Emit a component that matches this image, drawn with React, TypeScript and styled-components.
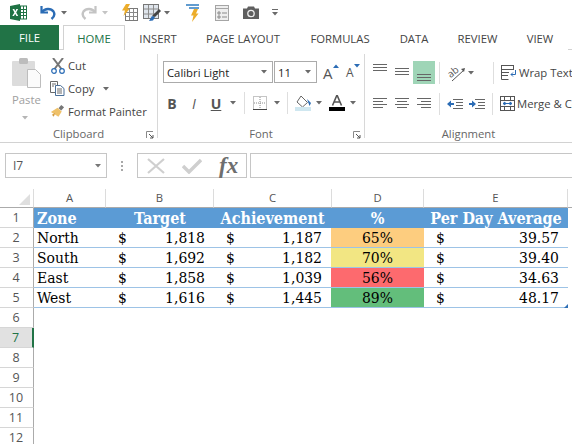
import styled, { createGlobalStyle } from 'styled-components';
import { ReactNode } from 'react';

const GlobalStyle = createGlobalStyle`
  html, body {
    margin: 0;
    padding: 0;
    width: 572px;
    height: 444px;
    overflow: hidden;
    background: #fff;
  }
  * { box-sizing: border-box; }
`;

const Caret = ({ color = '#6a6a6a' }: { color?: string }) => (
  <svg width="6" height="4" viewBox="0 0 6 4"><path d="M0 0h6L3 3.5z" fill={color} /></svg>
);

const ExcelLogo = () => (
  <svg width="17" height="17" viewBox="0 0 17 17">
    <rect x="5" y="2" width="11.5" height="13" fill="#fff" stroke="#1f7244" />
    <path d="M10.500 2v13M13.500 2v13M6 5.500h10M6 8.500h10M6 11.500h10" stroke="#1f7244" strokeWidth="1" />
    <path d="M0 2l10-2v17L0 15z" fill="#1f7244" />
    <path d="M2.500 5h1.800l1 2.200L6.400 5h1.700L6.200 8.400 8.200 12H6.400L5.200 9.700 4 12H2.300l2.100-3.600z" fill="#fff" />
  </svg>
);

const UndoIcon = () => (
  <svg width="16" height="15" viewBox="0 0 16 15">
    <path d="M1.500 1v6.500h6.500" fill="none" stroke="#2b6cb5" strokeWidth="2.200" />
    <path d="M2 7C5 3 11 3 13.500 6.500c1.500 2.500.5 5.500-2 7.500" fill="none" stroke="#2b6cb5" strokeWidth="2.400" />
  </svg>
);

const RedoIcon = () => (
  <svg width="16" height="15" viewBox="0 0 16 15">
    <path d="M14.500 1v6.500H8" fill="none" stroke="#c4c4c4" strokeWidth="2.200" />
    <path d="M14 7C11 3 5 3 2.500 6.500c-1.500 2.500-.5 5.500 2 7.500" fill="none" stroke="#c4c4c4" strokeWidth="2.400" />
  </svg>
);

const BoltTable = () => (
  <svg width="17" height="17" viewBox="0 0 17 17">
    <rect x="4.500" y="4.500" width="12" height="12" fill="#fff" stroke="#7a7a7a" />
    <path d="M8.500 5v11M12.500 5v11M5 8.500h11M5 12.500h11" stroke="#8a8a8a" />
    <path d="M5 0h4L6.500 4.500H9L2.500 12l1.500-5.500H1z" fill="#ecad2b" />
  </svg>
);

const GridBrush = () => (
  <svg width="18" height="17" viewBox="0 0 18 17">
    <rect x="0.500" y="0.500" width="15" height="14" fill="#dfe5ec" stroke="#777" />
    <path d="M5.500 1v13M10.500 1v13M1 5h14M1 10h14" stroke="#8c8c8c" />
    <path d="M16 5l2 2-6 6-3-1z" fill="#444" />
    <path d="M9 12l3 1-2 3.500-4 .5z" fill="#2b6cb5" />
  </svg>
);

const FilterBolt = () => (
  <svg width="14" height="18" viewBox="0 0 14 18">
    <path d="M0 1h13M3 4h10" stroke="#2f7cc0" strokeWidth="1.400" />
    <path d="M8 5h4l-2 4.500h2.500L6 18l1.500-6.500H5z" fill="#ecad2b" />
  </svg>
);

const FormIcon = () => (
  <svg width="14" height="16" viewBox="0 0 14 16">
    <rect x="0.500" y="0.500" width="13" height="15" fill="#eee" stroke="#a5a5a5" />
    <path d="M1 3.500h12" stroke="#a5a5a5" />
    <path d="M3 7h2v2H3zM3 11h2v2H3z" fill="none" stroke="#8a8a8a" />
    <path d="M7 8h5M7 12h5" stroke="#8a8a8a" />
  </svg>
);

const CameraIcon = () => (
  <svg width="16" height="13" viewBox="0 0 16 13">
    <path d="M0 2.500h4L5 .5h6l1 2h4V13H0z" fill="#5f5f5f" />
    <circle cx="8" cy="7.500" r="3.200" fill="#5f5f5f" stroke="#eee" strokeWidth="1.300" />
  </svg>
);

const CustomizeIcon = () => (
  <svg width="6" height="7" viewBox="0 0 6 7">
    <path d="M0 .5h6" stroke="#6a6a6a" />
    <path d="M0 3h6L3 6.500z" fill="#6a6a6a" />
  </svg>
);

const PasteIcon = () => (
  <svg width="29" height="30" viewBox="0 0 29 30">
    <rect x="0" y="3" width="23" height="25" rx="1" fill="#dcdcdc" />
    <rect x="7" y="0" width="9" height="6" rx="1.500" fill="#bcbcbc" />
    <path d="M15.500 11.500h8l5 5v13h-13z" fill="#fbfbfb" stroke="#bdbdbd" />
  </svg>
);

const ScissorsIcon = () => (
  <svg width="14" height="16" viewBox="0 0 14 16">
    <path d="M2 0l8.500 11M12 0L3.500 11" stroke="#757575" strokeWidth="2" />
    <circle cx="3" cy="13" r="2.300" fill="none" stroke="#2b6cb5" strokeWidth="1.200" />
    <circle cx="11" cy="13" r="2.300" fill="none" stroke="#2b6cb5" strokeWidth="1.200" />
  </svg>
);

const CopyIcon = () => (
  <svg width="15" height="15" viewBox="0 0 15 15">
    <path d="M.5.5h7v11h-7z" fill="#fff" stroke="#6a6a6a" />
    <path d="M5.500 4.500h5l3.500 3v7H5.500z" fill="#fff" stroke="#4a6f98" />
    <path d="M7 8h5M7 10h5M7 12h5M2 3h4M2 5h2" stroke="#6a6a6a" />
  </svg>
);

const BrushIcon = () => (
  <svg width="16" height="15" viewBox="0 0 16 15">
    <path d="M9 4l3-3.500 3 2.500-3 3.500z" fill="#777" />
    <path d="M8 3.500l4.500 4L9 13 1 8z" fill="#efc169" />
    <path d="M2 11l3.500-2L4 13z" fill="#d29a3f" />
  </svg>
);

const BordersIcon = () => (
  <svg width="14" height="14" viewBox="0 0 14 14">
    <rect x="0.500" y="0.500" width="13" height="13" fill="none" stroke="#8a8a8a" strokeDasharray="1 1" />
    <path d="M7 1v12M1 7h12" stroke="#8a8a8a" strokeDasharray="1 1" />
    <path d="M0 13.500h14" stroke="#444" />
  </svg>
);

const FillIcon = () => (
  <svg width="17" height="17" viewBox="0 0 17 17">
    <path d="M6 1l6.500 6.500L7.500 12 2 7z" fill="#fff" stroke="#666" />
    <path d="M12 4l4 4-1.500 3z" fill="#2b6cb5" />
    <rect x="0" y="12" width="16" height="4" fill="#cfe7f0" />
  </svg>
);

const FontColorIcon = () => (
  <svg width="16" height="16" viewBox="0 0 16 16">
    <path d="M3.500 10.500L8 0l4.500 10.500M5.200 7h5.600" fill="none" stroke="#555" strokeWidth="1.600" />
    <rect x="0" y="12" width="16" height="4" fill="#000" />
  </svg>
);

const Launcher = () => (
  <svg width="8" height="8" viewBox="0 0 8 8">
    <path d="M.5 7V.5H7" fill="none" stroke="#8a8a8a" />
    <path d="M3 3l4 4M7 4v3H4" fill="none" stroke="#555" />
  </svg>
);

const Lines = ({ rows }: { rows: [number, number, number][] }) => (
  <svg width="14" height="23" viewBox="0 0 14 23">
    {rows.map(([x, y, w]) => (
      <rect key={y} x={x} y={y} width={w} height="1" fill="#666" />
    ))}
  </svg>
);

const IndentIcon = ({ flip = false }: { flip?: boolean }) => (
  <svg width="16" height="10" viewBox="0 0 16 10">
    <path d="M6 .5h10M9 3.500h7M9 6.500h7M6 9.500h10" stroke="#666" />
    {flip
      ? <path d="M0 4h3V1.500L7 5 3 8.500V6H0z" fill="#2b6cb5" />
      : <path d="M7 4H4V1.500L0 5l4 3.500V6h3z" fill="#2b6cb5" />}
  </svg>
);

const WrapIcon = () => (
  <svg width="16" height="15" viewBox="0 0 16 15">
    <rect x="0.500" y="0.500" width="12" height="4" fill="none" stroke="#555" />
    <path d="M1 7.500h7M1 10.500h6M.5 5v9.500h7" fill="none" stroke="#555" />
    <path d="M14.500 5v4.500H10M12 7.500l-2 2 2 2" fill="none" stroke="#2b6cb5" />
  </svg>
);

const MergeIcon = () => (
  <svg width="15" height="15" viewBox="0 0 15 15">
    <rect x="0.500" y="0.500" width="14" height="14" fill="#fff" stroke="#555" />
    <path d="M1 4.500h13M1 10.500h13M4.500 1v3M10.500 1v3M4.500 11v3M10.500 11v3" stroke="#555" />
    <path d="M3 7.500h9M3 7.500l2-1.500v3zM12 7.500L10 6v3z" stroke="#2b6cb5" fill="#2b6cb5" />
  </svg>
);

const Page = styled.div`
  width: 572px;
  height: 444px;
  overflow: hidden;
  position: relative;
  display: flex;
  flex-direction: column;
  background: #fff;
  color: #444;
  font-family: 'Open Sans', 'Noto Sans', sans-serif;
  font-size: 11.300px;
`;

const QuickBar = styled.div`
  height: 25px;
  flex: none;
  display: flex;
  align-items: center;
  padding-left: 10px;
`;

const QuickItem = styled.span<{ $gap: number }>`
  display: flex;
  margin-left: ${({ $gap }) => $gap}px;
`;

const TabBar = styled.div`
  height: 25px;
  flex: none;
  display: flex;
  border-bottom: 1px solid #d2d2d2;
`;

const FileTab = styled.div`
  width: 59px;
  height: 25px;
  background: #217346;
  color: #fff;
  display: flex;
  align-items: center;
  justify-content: center;
`;

const Tab = styled.div<{ $active?: boolean; $width: number }>`
  width: ${({ $width }) => $width}px;
  height: 25px;
  display: flex;
  align-items: center;
  justify-content: center;
  white-space: nowrap;
  color: ${({ $active }) => ($active ? '#217346' : '#444')};
  background: #fff;
  border: 1px solid ${({ $active }) => ($active ? '#d2d2d2' : 'transparent')};
  border-bottom: none;
  margin-left: ${({ $active }) => ($active ? 4 : 0)}px;
`;

const Ribbon = styled.div`
  height: 93px;
  flex: none;
  display: flex;
  border-bottom: 1px solid #d2d2d2;
  padding-top: 4px;
`;

const Group = styled.div<{ $width: number; $divider?: boolean }>`
  width: ${({ $width }) => $width}px;
  height: 84px;
  flex: none;
  position: relative;
  display: flex;
  flex-direction: column;
  border-right: ${({ $divider }) => ($divider ? '1px solid #d8d8d8' : 'none')};
`;

const GroupBody = styled.div`
  flex: 1;
  display: flex;
  min-height: 0;
`;

const GroupLabel = styled.div`
  height: 12px;
  text-align: center;
  color: #666;
  line-height: 16px;
`;

const LauncherSpot = styled.span`
  position: absolute;
  right: 3px;
  bottom: -1px;
  display: flex;
`;

const PasteColumn = styled.div`
  width: 50px;
  padding: 4px 0 0 12px;
  display: flex;
  flex-direction: column;
  color: #a0a0a0;
`;

const PasteIconSlot = styled.span`
  display: flex;
  flex: none;
`;

const PasteLabel = styled.span`
  margin: 4px 0 8px 0;
  line-height: 16px;
`;

const PasteCaret = styled.span`
  display: flex;
  padding-left: 10px;
`;

const ClipColumn = styled.div`
  display: flex;
  flex-direction: column;
`;

const ClipRow = styled.div`
  height: 23px;
  flex: none;
  display: flex;
  align-items: center;
  gap: 3px;
  white-space: nowrap;
`;

const ClipIcon = styled.span`
  width: 15px;
  display: flex;
  justify-content: center;
`;

const CaretGap = styled.span`
  display: flex;
  margin-left: 6px;
`;

const ControlStack = styled.div`
  display: flex;
  flex-direction: column;
  padding: 7px 0 0 5px;
`;

const ControlRow = styled.div<{ $height?: number }>`
  height: ${({ $height }) => $height ?? 22}px;
  flex: none;
  display: flex;
  align-items: center;
`;

const Select = styled.div<{ $width: number }>`
  width: ${({ $width }) => $width}px;
  height: 22px;
  border: 1px solid #ababab;
  margin-right: 1px;
  padding: 0 5px 0 3px;
  display: flex;
  align-items: center;
  justify-content: space-between;
  color: #222;
  white-space: nowrap;
`;

const Spot = styled.span<{ $gap: number }>`
  display: flex;
  align-items: center;
  margin-left: ${({ $gap }) => $gap}px;
`;

const SizeButton = styled.span<{ $gap: number; $width: number; $size: number }>`
  width: ${({ $width }) => $width}px;
  height: 22px;
  position: relative;
  margin-left: ${({ $gap }) => $gap}px;
  font-size: ${({ $size }) => $size}px;
  line-height: 24px;
  color: #555;
`;

const SizeArrow = styled.span<{ $down?: boolean }>`
  position: absolute;
  right: 0;
  top: 3px;
  display: flex;
  transform: ${({ $down }) => ($down ? 'none' : 'rotate(180deg)')};
`;

const OrientGlyph = styled.span`
  width: 18px;
  height: 18px;
  position: relative;
  display: flex;
  align-items: center;
`;

const OrientText = styled.span`
  font-size: 10px;
  line-height: 10px;
  color: #555;
  transform: rotate(-38deg) translate(0, -2px);
`;

const OrientArrow = styled.span`
  position: absolute;
  inset: 0;
  display: flex;
`;

const FormatLetter = styled.span<{ $italic?: boolean; $underline?: boolean; $bold?: boolean; $width: number }>`
  width: ${({ $width }) => $width}px;
  text-align: center;
  color: #555;
  font-weight: ${({ $bold, $underline }) => ($bold || $underline ? 700 : 400)};
  font-style: ${({ $italic }) => ($italic ? 'italic' : 'normal')};
  text-decoration: ${({ $underline }) => ($underline ? 'underline' : 'none')};
  font-size: 14px;
`;

const Separator = styled.span<{ $gap: number; $after: number }>`
  width: 1px;
  height: 22px;
  flex: none;
  background: #dedede;
  margin-left: ${({ $gap }) => $gap}px;
  margin-right: ${({ $after }) => $after}px;
`;

const AlignStack = styled.div`
  display: flex;
  flex-direction: column;
  padding: 7px 0 0 8px;
  gap: 8px;
`;

const AlignRow = styled.div`
  height: 23px;
  flex: none;
  display: flex;
  align-items: center;
`;

const AlignButton = styled.span<{ $active?: boolean }>`
  width: 22px;
  height: 23px;
  flex: none;
  display: flex;
  align-items: center;
  background: ${({ $active }) => ($active ? '#9fd5b7' : 'transparent')};
  margin-left: ${({ $active }) => ($active ? -4 : 0)}px;
  padding-left: ${({ $active }) => ($active ? 4 : 0)}px;
`;

const WrapLabel = styled.span`
  margin-left: 2px;
  white-space: nowrap;
`;

const FormulaBar = styled.div`
  flex: none;
  height: 25px;
  margin-top: 10px;
  padding-left: 5px;
  display: flex;
  align-items: stretch;
`;

const NameBox = styled.div`
  width: 102px;
  border: 1px solid #c6c6c6;
  padding: 0 5px 0 7px;
  display: flex;
  align-items: center;
  justify-content: space-between;
  color: #555;
  font-size: 12px;
`;

const Dots = styled.div`
  width: 30px;
  display: flex;
  flex-direction: column;
  align-items: center;
  justify-content: center;
  gap: 2px;
`;

const Dot = styled.span`
  width: 2px;
  height: 2px;
  background: #a8a8a8;
`;

const FxBox = styled.div`
  width: 110px;
  border: 1px solid #c6c6c6;
  display: flex;
  align-items: center;
  gap: 17px;
  padding: 0 0 0 9px;
`;

const FxText = styled.span`
  font-family: 'Liberation Serif', serif;
  font-style: italic;
  font-weight: 700;
  font-size: 23px;
  color: #6e6e6e;
  line-height: 20px;
`;

const FormulaInput = styled.div`
  width: 322px;
  margin-left: 3px;
  border: 1px solid #c6c6c6;
  border-right: none;
`;

const Sheet = styled.div`
  flex: none;
  margin-top: 11px;
  position: relative;
`;

const HeaderRow = styled.div`
  height: 19px;
  display: flex;
`;

const Corner = styled.div`
  width: 34px;
  flex: none;
  border-right: 1px solid #dcdcdc;
  border-bottom: 1px solid #ababab;
  display: flex;
  align-items: flex-end;
  justify-content: flex-end;
  padding: 0 3px 2px 0;
`;

const ColumnHead = styled.div<{ $width: number }>`
  width: ${({ $width }) => $width}px;
  flex: none;
  text-align: center;
  border-right: 1px solid #dcdcdc;
  border-bottom: 1px solid #ababab;
  color: #555;
  line-height: 18px;
`;

const HeaderFill = styled.div`
  flex: 1;
  border-bottom: 1px solid #ababab;
`;

const SheetRow = styled.div`
  height: 20px;
  display: flex;
`;

const RowHead = styled.div<{ $selected?: boolean }>`
  width: 34px;
  flex: none;
  display: flex;
  align-items: center;
  justify-content: center;
  padding-right: 1px;
  font-size: 12.500px;
  color: ${({ $selected }) => ($selected ? '#217346' : '#555')};
  background: ${({ $selected }) => ($selected ? '#e1e1e1' : '#fff')};
  border-bottom: 1px solid #d6d6d6;
  border-right: ${({ $selected }) => ($selected ? '2px solid #217346' : '1px solid #ababab')};
`;

const Cell = styled.div<{ $width: number; $bg?: string; $head?: boolean; $align?: string }>`
  width: ${({ $width }) => $width}px;
  flex: none;
  height: 20px;
  display: flex;
  align-items: center;
  padding: 0 3px;
  justify-content: ${({ $align }) => $align ?? 'flex-start'};
  background: ${({ $bg, $head }) => $bg ?? ($head ? '#5b9bd5' : '#fff')};
  color: ${({ $head }) => ($head ? '#fff' : '#000')};
  font-family: 'DejaVu Serif Condensed', 'DejaVu Serif', 'Liberation Serif', serif;
  font-stretch: condensed;
  font-weight: ${({ $head }) => ($head ? 700 : 400)};
  font-size: ${({ $head }) => ($head ? 16 : 15.5)}px;
  white-space: nowrap;
  border-bottom: ${({ $head }) => ($head ? 'none' : '1px solid #9dc3e6')};
`;

const MoneyCell = styled(Cell)`
  justify-content: space-between;
  padding: 0 9px 0 12px;
`;

const ResizeHandle = styled.span`
  position: absolute;
  left: 564px;
  top: 115px;
  width: 4px;
  height: 4px;
  background: #2f6fb5;
  clip-path: polygon(100% 0, 100% 100%, 0 100%);
`;

const COLUMNS = [
  { name: 'A', width: 72 },
  { name: 'B', width: 108 },
  { name: 'C', width: 118 },
  { name: 'D', width: 92 },
  { name: 'E', width: 144 },
];

const ROWS = [
  { zone: 'North', target: '1,818', achieved: '1,187', pct: '65%', color: '#fdcd7f', avg: '39.57' },
  { zone: 'South', target: '1,692', achieved: '1,182', pct: '70%', color: '#f2e683', avg: '39.40' },
  { zone: 'East', target: '1,858', achieved: '1,039', pct: '56%', color: '#fd6a6e', avg: '34.63' },
  { zone: 'West', target: '1,616', achieved: '1,445', pct: '89%', color: '#63be7b', avg: '48.17' },
];

const TABS = [
  { label: 'INSERT', width: 66 },
  { label: 'PAGE LAYOUT', width: 104 },
  { label: 'FORMULAS', width: 90 },
  { label: 'DATA', width: 58 },
  { label: 'REVIEW', width: 69 },
  { label: 'VIEW', width: 56 },
];

const Money = ({ width, value }: { width: number; value: string }) => (
  <MoneyCell $width={width}>
    <span>$</span>
    <span>{value}</span>
  </MoneyCell>
);

const Quick = ({ gap, children }: { gap: number; children: ReactNode }) => (
  <QuickItem $gap={gap}>{children}</QuickItem>
);

export default function App() {
  return (
    <Page>
      <GlobalStyle />
      <QuickBar>
        <Quick gap={0}><ExcelLogo /></Quick>
        <Quick gap={13}><UndoIcon /></Quick>
        <Quick gap={5}><Caret /></Quick>
        <Quick gap={14}><RedoIcon /></Quick>
        <Quick gap={5}><Caret color="#c4c4c4" /></Quick>
        <Quick gap={13}><BoltTable /></Quick>
        <Quick gap={5}><GridBrush /></Quick>
        <Quick gap={3}><Caret /></Quick>
        <Quick gap={16}><FilterBolt /></Quick>
        <Quick gap={15}><FormIcon /></Quick>
        <Quick gap={14}><CameraIcon /></Quick>
        <Quick gap={13}><CustomizeIcon /></Quick>
      </QuickBar>

      <TabBar>
        <FileTab>FILE</FileTab>
        <Tab $active $width={62}>HOME</Tab>
        {TABS.map((tab) => (
          <Tab key={tab.label} $width={tab.width}>{tab.label}</Tab>
        ))}
      </TabBar>

      <Ribbon>
        <Group $width={158} $divider>
          <GroupBody>
            <PasteColumn>
              <PasteIconSlot><PasteIcon /></PasteIconSlot>
              <PasteLabel>Paste</PasteLabel>
              <PasteCaret><Caret color="#b5b5b5" /></PasteCaret>
            </PasteColumn>
            <ClipColumn>
              <ClipRow><ClipIcon><ScissorsIcon /></ClipIcon>Cut</ClipRow>
              <ClipRow><ClipIcon><CopyIcon /></ClipIcon>Copy<CaretGap><Caret /></CaretGap></ClipRow>
              <ClipRow><ClipIcon><BrushIcon /></ClipIcon>Format Painter</ClipRow>
            </ClipColumn>
          </GroupBody>
          <GroupLabel>Clipboard</GroupLabel>
          <LauncherSpot><Launcher /></LauncherSpot>
        </Group>

        <Group $width={207} $divider>
          <GroupBody>
            <ControlStack>
              <ControlRow>
                <Select $width={110}>Calibri Light<Caret /></Select>
                <Select $width={43}>11<Caret /></Select>
                <SizeButton $gap={5} $width={16} $size={15}>
                  A<SizeArrow><Caret color="#2b6cb5" /></SizeArrow>
                </SizeButton>
                <SizeButton $gap={7} $width={14} $size={12}>
                  A<SizeArrow $down><Caret color="#2b6cb5" /></SizeArrow>
                </SizeButton>
              </ControlRow>
              <ControlRow $height={40}>
                <FormatLetter $bold $width={18}>B</FormatLetter>
                <FormatLetter $italic $width={26}>I</FormatLetter>
                <FormatLetter $underline $width={18}>U</FormatLetter>
                <Spot $gap={5}><Caret /></Spot>
                <Separator $gap={8} $after={8} />
                <BordersIcon />
                <Spot $gap={7}><Caret /></Spot>
                <Separator $gap={7} $after={7} />
                <FillIcon />
                <Spot $gap={4}><Caret /></Spot>
                <Spot $gap={7}><FontColorIcon /></Spot>
                <Spot $gap={5}><Caret /></Spot>
              </ControlRow>
            </ControlStack>
          </GroupBody>
          <GroupLabel>Font</GroupLabel>
          <LauncherSpot><Launcher /></LauncherSpot>
        </Group>

        <Group $width={207}>
          <GroupBody>
            <AlignStack>
              <AlignRow>
                <AlignButton><Lines rows={[[0, 3, 14], [0, 6, 14], [0, 9, 14]]} /></AlignButton>
                <AlignButton><Lines rows={[[0, 7, 14], [0, 10, 14], [0, 13, 14]]} /></AlignButton>
                <AlignButton $active><Lines rows={[[0, 13, 14], [0, 16, 14], [0, 19, 14]]} /></AlignButton>
                <Separator $gap={4} $after={8} />
                <OrientGlyph>
                  <OrientText>ab</OrientText>
                  <OrientArrow>
                    <svg width="18" height="18" viewBox="0 0 18 18">
                      <path d="M4 17L16 6" stroke="#555" />
                      <path d="M13 5l4-1-1 4z" fill="#555" />
                    </svg>
                  </OrientArrow>
                </OrientGlyph>
                <Spot $gap={2}><Caret /></Spot>
                <Separator $gap={19} $after={7} />
                <WrapIcon />
                <WrapLabel>Wrap Text</WrapLabel>
              </AlignRow>
              <AlignRow>
                <AlignButton><Lines rows={[[0, 6, 14], [0, 9, 10], [0, 12, 14], [0, 15, 10]]} /></AlignButton>
                <AlignButton><Lines rows={[[0, 6, 14], [2, 9, 10], [0, 12, 14], [2, 15, 10]]} /></AlignButton>
                <AlignButton><Lines rows={[[0, 6, 14], [4, 9, 10], [0, 12, 14], [4, 15, 10]]} /></AlignButton>
                <Separator $gap={0} $after={7} />
                <IndentIcon />
                <Spot $gap={6}><IndentIcon flip /></Spot>
                <Separator $gap={7} $after={7} />
                <MergeIcon />
                <WrapLabel>Merge &amp; Center</WrapLabel>
              </AlignRow>
            </AlignStack>
          </GroupBody>
          <GroupLabel>Alignment</GroupLabel>
        </Group>
      </Ribbon>

      <FormulaBar>
        <NameBox>I7<Caret color="#777" /></NameBox>
        <Dots><Dot /><Dot /><Dot /></Dots>
        <FxBox>
          <svg width="18" height="16" viewBox="0 0 18 16"><path d="M1 1l16 14M17 1L1 15" stroke="#cfcfcf" strokeWidth="2.200" /></svg>
          <svg width="20" height="16" viewBox="0 0 20 16"><path d="M1 8l6 6L19 2" fill="none" stroke="#cfcfcf" strokeWidth="3.400" /></svg>
          <FxText>fx</FxText>
        </FxBox>
        <FormulaInput />
      </FormulaBar>

      <Sheet>
        <HeaderRow>
          <Corner>
            <svg width="11" height="11" viewBox="0 0 11 11"><path d="M11 0v11H0z" fill="#dfdfdf" /></svg>
          </Corner>
          {COLUMNS.map((col) => (
            <ColumnHead key={col.name} $width={col.width}>{col.name}</ColumnHead>
          ))}
          <HeaderFill />
        </HeaderRow>

        <SheetRow>
          <RowHead>1</RowHead>
          <Cell $head $width={72}>Zone</Cell>
          <Cell $head $width={108} $align="center">Target</Cell>
          <Cell $head $width={117} $align="center">Achievement</Cell>
          <Cell $head $width={93} $align="center">%</Cell>
          <Cell $head $width={144} $align="center">Per Day Average</Cell>
        </SheetRow>

        {ROWS.map((row, i) => (
          <SheetRow key={row.zone}>
            <RowHead>{i + 2}</RowHead>
            <Cell $width={72}>{row.zone}</Cell>
            <Money width={108} value={row.target} />
            <Money width={117} value={row.achieved} />
            <Cell $width={93} $bg={row.color} $align="center">{row.pct}</Cell>
            <Money width={144} value={row.avg} />
          </SheetRow>
        ))}

        {[6, 7, 8, 9, 10, 11, 12].map((n) => (
          <SheetRow key={n}>
            <RowHead $selected={n === 7}>{n}</RowHead>
          </SheetRow>
        ))}
        <ResizeHandle />
      </Sheet>
    </Page>
  );
}
